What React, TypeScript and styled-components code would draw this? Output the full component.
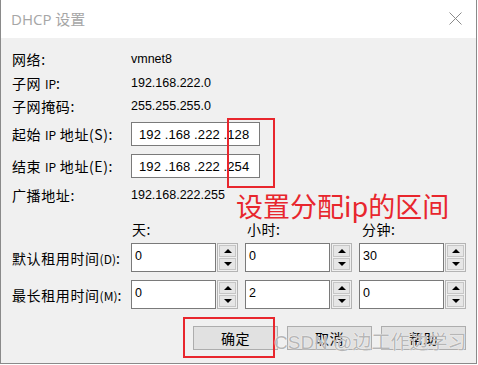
import styled, { createGlobalStyle } from 'styled-components';

const GlobalStyle = createGlobalStyle`
  html, body {
    margin: 0;
    padding: 0;
    background: #ffffff;
  }
`;

const cjk = `"Noto Sans CJK SC", "Noto Sans", sans-serif`;
const latin = `"Liberation Sans", "Noto Sans CJK SC", sans-serif`;

const Window = styled.div`
  position: relative;
  width: 477px;
  height: 364px;
  box-sizing: border-box;
  background: #f0f0f0;
  border: 1px solid #8a8a8a;
  border-top: none;
  font-family: ${cjk};
  color: #000;
  overflow: hidden;
`;

const TitleBar = styled.div`
  height: 38px;
  background: #ffffff;
  display: flex;
  align-items: center;
  justify-content: space-between;
  padding: 0 14px 0 10px;
`;

const Title = styled.span`
  font-family: "Open Sans", ${cjk};
  font-size: 15px;
  color: #a6a6a6;
  padding-bottom: 1px;
`;

const Close = styled.svg`
  width: 13px;
  height: 13px;
  margin-top: -1px;
`;

const Body = styled.div`
  padding: 9px 10px 0 11px;
`;

const Row = styled.div<{ $h: number; $mt?: number }>`
  display: grid;
  grid-template-columns: 119px 1fr;
  align-items: center;
  height: ${(p) => p.$h}px;
  margin-top: ${(p) => p.$mt ?? 0}px;
`;

const Label = styled.span`
  font-size: 14px;
  letter-spacing: 0.6px;
  white-space: nowrap;
`;

const Key = styled.span`
  font-size: 12px;
  letter-spacing: 0;
`;

const Value = styled.span`
  font-family: ${latin};
  font-size: 12.5px;
`;

const IpBox = styled.div`
  width: 129px;
  height: 24px;
  box-sizing: border-box;
  background: #fff;
  border: 1px solid #7a7a7a;
  display: flex;
  align-items: center;
  padding-left: 7px;
  font-family: ${latin};
  font-size: 13px;
  letter-spacing: 0.1px;
  white-space: pre;
`;

const Triple = styled.div`
  display: flex;
  gap: 7px;
`;

const Heading = styled.span`
  width: 107px;
  font-size: 14px;
  padding-left: 1px;
  letter-spacing: 0.5px;
`;

const Spin = styled.div`
  width: 107px;
  height: 29px;
  display: flex;
  gap: 1px;
`;

const SpinText = styled.div`
  flex: 1;
  box-sizing: border-box;
  background: #fff;
  border: 1px solid #7a7a7a;
  padding: 4px 0 0 3px;
  font-family: ${latin};
  font-size: 12.5px;
  line-height: 16px;
`;

const SpinButtons = styled.div`
  width: 21px;
  box-sizing: border-box;
  border: 1px solid #b4b4b4;
  background: #f0f0f0;
  display: flex;
  flex-direction: column;
  gap: 1px;
  padding: 1px;
`;

const SpinButton = styled.div`
  flex: 1;
  border: 1px solid #c6c6c6;
  background: #e6e6e6;
  display: flex;
  align-items: center;
  justify-content: center;
`;

const Arrow = styled.div<{ $up?: boolean }>`
  width: 0;
  height: 0;
  border-left: 4px solid transparent;
  border-right: 4px solid transparent;
  ${(p) => (p.$up ? 'border-bottom: 4px solid #000;' : 'border-top: 4px solid #000;')}
`;

const Buttons = styled.div`
  display: flex;
  justify-content: flex-end;
  gap: 9px;
  margin-top: 17px;
`;

const Button = styled.div`
  width: 85px;
  height: 24px;
  box-sizing: border-box;
  background: #e1e1e1;
  border: 1px solid #adadad;
  display: flex;
  align-items: center;
  justify-content: center;
  font-size: 14px;
  letter-spacing: 0.5px;
`;

const RedBox = styled.div`
  position: absolute;
  border: 2px solid #e8262d;
  box-sizing: border-box;
  pointer-events: none;
`;

const Note = styled.span`
  position: absolute;
  left: 235px;
  top: 192px;
  font-family: ${cjk};
  font-size: 27px;
  line-height: 27px;
  color: #e8262d;
  white-space: nowrap;
`;

const Watermark = styled.span`
  position: absolute;
  left: 273px;
  top: 331px;
  font-family: ${latin};
  font-size: 19px;
  line-height: 24px;
  color: rgba(150, 150, 150, 0.7);
  text-shadow: 0 0 1px #fff, 0 0 1px #fff;
  white-space: nowrap;
`;

type SpinProps = { value: string };

const SpinField = ({ value }: SpinProps) => (
  <Spin>
    <SpinText>{value}</SpinText>
    <SpinButtons>
      <SpinButton>
        <Arrow $up />
      </SpinButton>
      <SpinButton>
        <Arrow />
      </SpinButton>
    </SpinButtons>
  </Spin>
);

const App = () => {
  return (
    <>
      <GlobalStyle />
      <Window>
        <TitleBar>
          <Title>DHCP 设置</Title>
          <Close viewBox="0 0 13 13">
            <path d="M0.5 0.5 L12.5 12.5 M12.5 0.5 L0.5 12.5" stroke="#8a8a8a" strokeWidth="1" fill="none" />
          </Close>
        </TitleBar>
        <Body>
          <Row $h={24}>
            <Label>网络:</Label>
            <Value>vmnet8</Value>
          </Row>
          <Row $h={23}>
            <Label>
              子网 <Key>IP</Key>:
            </Label>
            <Value>192.168.222.0</Value>
          </Row>
          <Row $h={24}>
            <Label>子网掩码:</Label>
            <Value>255.255.255.0</Value>
          </Row>
          <Row $h={24} $mt={4}>
            <Label>
              起始 <Key>IP</Key> 地址(S):
            </Label>
            <IpBox>192 .168 .222 .128</IpBox>
          </Row>
          <Row $h={24} $mt={8}>
            <Label>
              结束 <Key>IP</Key> 地址(E):
            </Label>
            <IpBox>192 .168 .222 .254</IpBox>
          </Row>
          <Row $h={24} $mt={5}>
            <Label>广播地址:</Label>
            <Value>192.168.222.255</Value>
          </Row>
          <Row $h={22} $mt={11}>
            <span />
            <Triple>
              <Heading>天:</Heading>
              <Heading>小时:</Heading>
              <Heading>分钟:</Heading>
            </Triple>
          </Row>
          <Row $h={29} $mt={3}>
            <Label>
              默认租用时间<Key>(D)</Key>:
            </Label>
            <Triple>
              <SpinField value="0" />
              <SpinField value="0" />
              <SpinField value="30" />
            </Triple>
          </Row>
          <Row $h={29} $mt={8}>
            <Label>
              最长租用时间<Key>(M)</Key>:
            </Label>
            <Triple>
              <SpinField value="0" />
              <SpinField value="2" />
              <SpinField value="0" />
            </Triple>
          </Row>
          <Buttons>
            <Button>确定</Button>
            <Button>取消</Button>
            <Button>帮助</Button>
          </Buttons>
        </Body>
        <RedBox style={{ left: 226, top: 118, width: 48, height: 70 }} />
        <RedBox style={{ left: 182, top: 317, width: 92, height: 41 }} />
        <Note>设置分配ip的区间</Note>
        <Watermark>CSDN @边工作边学习</Watermark>
      </Window>
    </>
  );
};

export default App;
